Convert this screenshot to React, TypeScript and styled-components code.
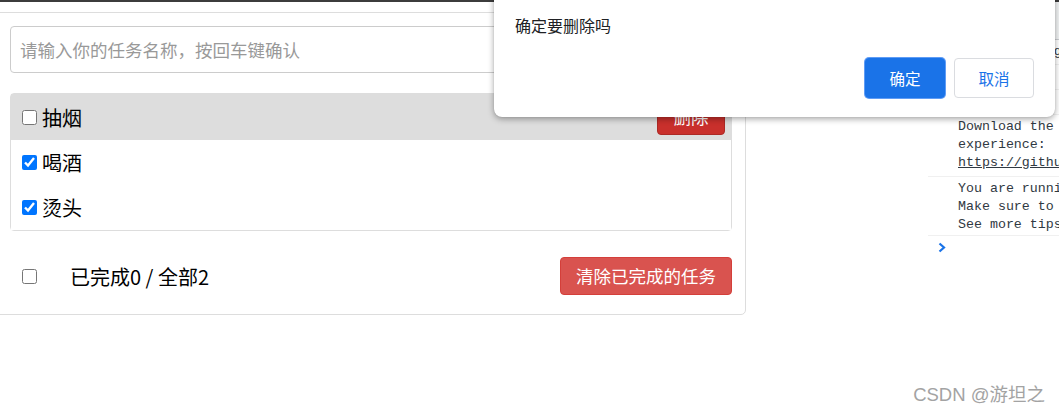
import React from "react";
import styled, { createGlobalStyle } from "styled-components";

const Global = createGlobalStyle`
  html, body { margin: 0; padding: 0; background: #fff; overflow: hidden; }
  #root { width: 1059px; height: 414px; position: relative; overflow: hidden; }
  * { box-sizing: border-box; }
`;

const CJK = `"Noto Sans CJK SC", "Microsoft YaHei", sans-serif`;

const Screen = styled.div`
  position: relative;
  width: 1059px;
  height: 414px;
  display: flex;
  flex-direction: column;
  font-family: ${CJK};
`;

const TopBar = styled.div`
  height: 2px;
  background: #3c3c3c;
  flex: none;
`;

const Body = styled.div`
  flex: 1;
  display: grid;
  grid-template-columns: 928px 131px;
`;

const MainArea = styled.main`
  overflow: hidden;
`;

const Panel = styled.section`
  width: 756px;
  margin-left: -10px;
  margin-top: 10px;
  border: 1px solid #ddd;
  border-radius: 5px;
  padding: 13px 13px 19px 19px;
`;

const TaskInput = styled.input`
  display: block;
  width: 100%;
  height: 47px;
  border: 1px solid #ccc;
  border-radius: 4px;
  padding: 0 9px;
  font-family: ${CJK};
  font-size: 17.5px;
  color: #333;
  outline: none;
  &::placeholder { color: #999; }
`;

const List = styled.ul`
  margin: 20px 0 0;
  padding: 0;
  list-style: none;
  border: 1px solid #ddd;
  border-radius: 4px;
`;

const Item = styled.li<{ $hover?: boolean }>`
  height: 45px;
  display: flex;
  align-items: center;
  justify-content: space-between;
  padding: 0 6px 0 11px;
  background: ${(p) => (p.$hover ? "#ddd" : "#fff")};
  &:first-child { height: 46px; }
`;

const Label = styled.label`
  display: flex;
  align-items: center;
  gap: 5px;
  font-size: 20px;
  color: #000;
`;

const Check = styled.input.attrs({ type: "checkbox" })`
  width: 15px;
  height: 15px;
  margin: 0;
  accent-color: #0075ff;
`;

const DangerButton = styled.button<{ $dark?: boolean }>`
  font-family: ${CJK};
  font-size: 17.5px;
  color: #fff;
  border-radius: 4px;
  background: ${(p) => (p.$dark ? "#c9302c" : "#d9534f")};
  border: 1px solid ${(p) => (p.$dark ? "#ac2925" : "#d43f3a")};
  padding: 0 15px;
  line-height: 1;
`;

const DeleteButton = styled(DangerButton)`
  height: 36px;
  width: 68px;
  padding: 0;
`;

const ClearButton = styled(DangerButton)`
  height: 38px;
  width: 172px;
`;

const Footer = styled.div`
  margin-top: 26px;
  height: 38px;
  display: flex;
  align-items: center;
  padding-left: 12px;
`;

const FooterText = styled.span`
  margin-left: 33px;
  font-size: 20px;
  color: #000;
  flex: 1;
`;

const DevTools = styled.aside`
  background: #fff;
  font-family: "Liberation Mono", "DejaVu Sans Mono", monospace;
  font-size: 13.3px;
  color: #303942;
  display: flex;
  flex-direction: column;
  overflow: hidden;
  white-space: nowrap;
`;

const DevToolbar = styled.div`
  height: 38px;
  border-bottom: 1px solid #cacdd1;
  background: #f1f3f4;
`;

const LogRow = styled.div<{ $bottom?: number }>`
  padding: 3px 0 ${(p) => p.$bottom ?? 3}px 30px;
  border-bottom: 1px solid #f0f0f0;
  line-height: 18px;
`;

const LogLine = styled.div``;

const LogLink = styled.span`
  text-decoration: underline;
`;

const Prompt = styled.div`
  padding: 6px 0 0 10px;
  display: flex;
`;

const Dialog = styled.div`
  position: absolute;
  left: 494px;
  top: -6px;
  width: 561px;
  height: 123px;
  background: #fff;
  border-radius: 0 0 8px 8px;
  box-shadow: 0 2px 6px rgba(0, 0, 0, 0.35), 0 0 1px rgba(0, 0, 0, 0.2);
  padding: 20px 21px 19px 21px;
  display: flex;
  flex-direction: column;
`;

const DialogText = styled.div`
  font-size: 16px;
  line-height: 22px;
  color: #202124;
`;

const DialogActions = styled.div`
  margin-top: auto;
  display: flex;
  justify-content: flex-end;
  align-items: center;
  gap: 9px;
`;

const DialogButton = styled.button<{ $primary?: boolean }>`
  width: 80px;
  height: 40px;
  border-radius: 4px;
  font-family: ${CJK};
  font-size: 15.5px;
  cursor: pointer;
  background: ${(p) => (p.$primary ? "#1a73e8" : "#fff")};
  color: ${(p) => (p.$primary ? "#fff" : "#1a73e8")};
  border: 1px solid ${(p) => (p.$primary ? "#1a73e8" : "#dadce0")};
  box-shadow: ${(p) => (p.$primary ? "0 0 0 1px #5f9cf5" : "none")};
`;

const Watermark = styled.div`
  position: absolute;
  right: 14px;
  bottom: 8px;
  font-family: "Liberation Sans", ${CJK};
  font-size: 18.5px;
  color: #a3a3a3;
  text-shadow: 0 0 1px #fff;
`;

const todos = [
  { id: 1, name: "抽烟", done: false, hover: true },
  { id: 2, name: "喝酒", done: true, hover: false },
  { id: 3, name: "烫头", done: true, hover: false },
];

export default function App() {
  return (
    <>
      <Global />
      <Screen>
        <TopBar />
        <Body>
          <MainArea>
            <Panel>
              <TaskInput placeholder="请输入你的任务名称，按回车键确认" />
              <List>
                {todos.map((t) => (
                  <Item key={t.id} $hover={t.hover}>
                    <Label>
                      <Check defaultChecked={t.done} />
                      <span>{t.name}</span>
                    </Label>
                    {t.hover && <DeleteButton $dark>删除</DeleteButton>}
                  </Item>
                ))}
              </List>
              <Footer>
                <Check />
                <FooterText>已完成0 / 全部2</FooterText>
                <ClearButton>清除已完成的任务</ClearButton>
              </Footer>
            </Panel>
          </MainArea>
          <DevTools>
            <DevToolbar />
            <LogRow>[HMR] Waiting</LogRow>
            <LogRow>[WDS] Live</LogRow>
            <LogRow>[WDS] Hot</LogRow>
            <LogRow $bottom={4}>
              <LogLine>Download the Vue Devtools extension</LogLine>
              <LogLine>experience:</LogLine>
              <LogLine>
                <LogLink>https://github.com/vuejs/vue-devtools</LogLink>
              </LogLine>
            </LogRow>
            <LogRow $bottom={1}>
              <LogLine>You are running Vue in development mode.</LogLine>
              <LogLine>Make sure to turn on production mode.</LogLine>
              <LogLine>See more tips at https://vuejs.org</LogLine>
            </LogRow>
            <Prompt>
              <svg width="8" height="11" viewBox="0 0 8 11" fill="none">
                <path d="M1.5 1.5 L6 5.5 L1.5 9.5" stroke="#1a73e8" strokeWidth="2.2" />
              </svg>
            </Prompt>
          </DevTools>
        </Body>
        <Dialog>
          <DialogText>确定要删除吗</DialogText>
          <DialogActions>
            <DialogButton $primary>确定</DialogButton>
            <DialogButton>取消</DialogButton>
          </DialogActions>
        </Dialog>
        <Watermark>CSDN @游坦之</Watermark>
      </Screen>
    </>
  );
}
